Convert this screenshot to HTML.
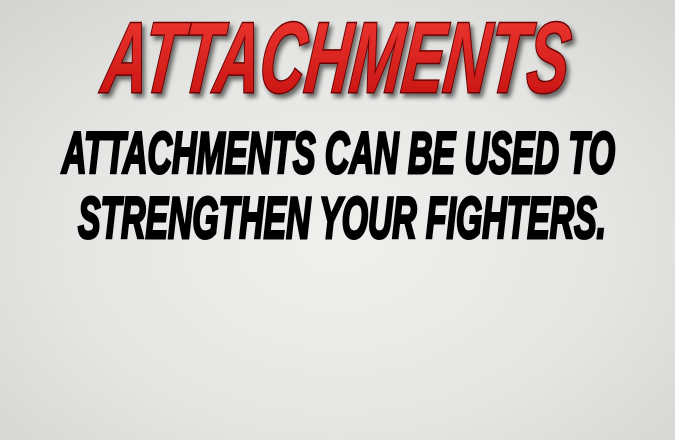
<!DOCTYPE html>
<html><head><meta charset="utf-8"><style>
html,body{margin:0;padding:0;width:675px;height:440px;overflow:hidden}
body{background:radial-gradient(ellipse 70% 75% at 50% 55%,#efefed 0%,#e6e6e4 55%,#d4d4d2 100%)}
svg{position:absolute;left:0;top:0}
</style></head><body>
<svg width="675" height="440" viewBox="0 0 675 440">
<defs>
<linearGradient id="rg" x1="0" y1="0" x2="0" y2="1">
<stop offset="0" stop-color="#f03a34"/><stop offset="1" stop-color="#c40f0e"/>
</linearGradient>
<filter id="sh" x="-10%" y="-20%" width="120%" height="150%">
<feDropShadow dx="3" dy="4" stdDeviation="2.5" flood-color="#000" flood-opacity="0.55"/>
</filter>
</defs>
<g filter="url(#sh)">
<text x="102" y="92" textLength="466" lengthAdjust="spacingAndGlyphs" font-family="Liberation Sans, sans-serif" font-weight="bold" font-style="italic" font-size="100" fill="url(#rg)" stroke="#6a0404" stroke-width="3" paint-order="stroke" transform="skewX(-6) translate(8,0)">ATTACHMENTS</text>
</g>
<text x="62" y="173" textLength="553" lengthAdjust="spacingAndGlyphs" font-family="Liberation Sans, sans-serif" font-weight="bold" font-style="italic" font-size="58" fill="#000" stroke="#000" stroke-width="3">ATTACHMENTS CAN BE USED TO</text>
<text x="78" y="238" textLength="528" lengthAdjust="spacingAndGlyphs" font-family="Liberation Sans, sans-serif" font-weight="bold" font-style="italic" font-size="58" fill="#000" stroke="#000" stroke-width="3">STRENGTHEN YOUR FIGHTERS.</text>
</svg>
</body></html>
